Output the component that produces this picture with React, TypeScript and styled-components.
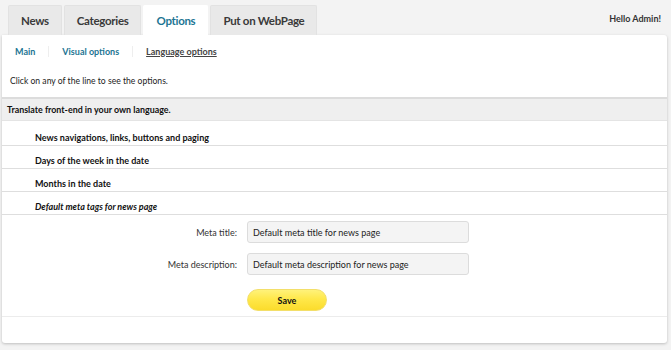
import * as React from "react";
import styled, { createGlobalStyle } from "styled-components";

const GlobalStyle = createGlobalStyle`
  html, body {
    margin: 0;
    padding: 0;
    background: #f3f3f3;
    font-family: Lato, "Open Sans", sans-serif;
    color: #222;
  }
`;

const Page = styled.div`
  width: 671px;
  height: 350px;
  padding: 5px 4px 0 2px;
  box-sizing: border-box;
`;

const TopBar = styled.div`
  display: flex;
  align-items: flex-start;
  justify-content: space-between;
  height: 30px;
`;

const Tabs = styled.div`
  display: flex;
  gap: 2px;
  padding-left: 6px;
`;

const Tab = styled.div<{ $active?: boolean }>`
  height: 30px;
  display: flex;
  align-items: center;
  padding: 0 12px;
  font-size: 11.5px;
  letter-spacing: -0.3px;
  font-weight: 700;
  color: ${(p) => (p.$active ? "#1d7593" : "#3a3a3a")};
  background: ${(p) => (p.$active ? "#fff" : "#e9e9e9")};
  border: 1px solid ${(p) => (p.$active ? "#fff" : "#e2e2e2")};
  border-bottom: none;
  border-radius: 2px 2px 0 0;
  box-sizing: border-box;
`;

const Hello = styled.div`
  font-size: 9px;
  font-weight: 700;
  color: #333;
  padding: 8px 6px 0 0;
`;

const Panel = styled.div`
  background: #fff;
  height: 308px;
  border-radius: 0 3px 3px 3px;
  box-shadow: 0 1px 3px rgba(0, 0, 0, 0.22);
  display: flex;
  flex-direction: column;
`;

const SubNav = styled.div`
  display: flex;
  align-items: center;
  padding: 10px 0 0 13px;
  height: 12px;
`;

const SubLink = styled.span<{ $current?: boolean }>`
  font-size: 9px;
  font-weight: 700;
  color: ${(p) => (p.$current ? "#444" : "#1d7593")};
  text-decoration: ${(p) => (p.$current ? "underline" : "none")};
  padding: 0 13px;
  border-left: 1px solid #eee;
  &:first-child {
    border-left: none;
    padding-left: 0;
  }
`;

const Hint = styled.div`
  font-size: 8.6px;
  color: #222;
  padding: 19px 0 0 8px;
  height: 21px;
`;

const SectionHead = styled.div`
  background: #efefef;
  border-top: 2px solid #dcdcdc;
  border-bottom: 1px solid #e4e4e4;
  height: 21px;
  margin-bottom: 2px;
  display: flex;
  align-items: center;
  padding-left: 5px;
  font-size: 8.9px;
  font-weight: 700;
  color: #111;
`;

const Row = styled.div<{ $italic?: boolean }>`
  height: 23px;
  box-sizing: border-box;
  padding: 9px 0 0 33px;
  border-bottom: 1px solid #dedede;
  font-size: 9px;
  font-weight: 700;
  font-style: ${(p) => (p.$italic ? "italic" : "normal")};
  color: #111;
`;

const Form = styled.div`
  display: grid;
  grid-template-columns: 235px 222px;
  column-gap: 10px;
  row-gap: 10px;
  align-items: center;
  padding: 6px 0 5px 0;
  border-bottom: 1px solid #ececec;
`;

const Label = styled.div`
  text-align: right;
  font-size: 9px;
  color: #333;
`;

const Input = styled.div`
  height: 22px;
  box-sizing: border-box;
  background: #f4f4f4;
  border: 1px solid #dcdcdc;
  border-radius: 3px;
  display: flex;
  align-items: center;
  padding-left: 5px;
  font-size: 9px;
  color: #222;
`;

const SaveButton = styled.button`
  grid-column: 2;
  width: 80px;
  height: 22px;
  margin-top: 4px;
  border: 1px solid #f3df6a;
  border-radius: 11px;
  background: linear-gradient(#fff27a 0%, #ffe84a 45%, #fbdc2c 100%);
  font-family: Lato, "Open Sans", sans-serif;
  font-size: 9px;
  font-weight: 700;
  color: #111;
  padding: 0;
`;

export default function App() {
  return (
    <>
      <GlobalStyle />
      <Page>
        <TopBar>
          <Tabs>
            <Tab>News</Tab>
            <Tab>Categories</Tab>
            <Tab $active>Options</Tab>
            <Tab>Put on WebPage</Tab>
          </Tabs>
          <Hello>Hello Admin!</Hello>
        </TopBar>
        <Panel>
          <SubNav>
            <SubLink>Main</SubLink>
            <SubLink>Visual options</SubLink>
            <SubLink $current>Language options</SubLink>
          </SubNav>
          <Hint>Click on any of the line to see the options.</Hint>
          <SectionHead>Translate front-end in your own language.</SectionHead>
          <Row>News navigations, links, buttons and paging</Row>
          <Row>Days of the week in the date</Row>
          <Row>Months in the date</Row>
          <Row $italic>Default meta tags for news page</Row>
          <Form>
            <Label>Meta title:</Label>
            <Input>Default meta title for news page</Input>
            <Label>Meta description:</Label>
            <Input>Default meta description for news page</Input>
            <SaveButton>Save</SaveButton>
          </Form>
        </Panel>
      </Page>
    </>
  );
}
